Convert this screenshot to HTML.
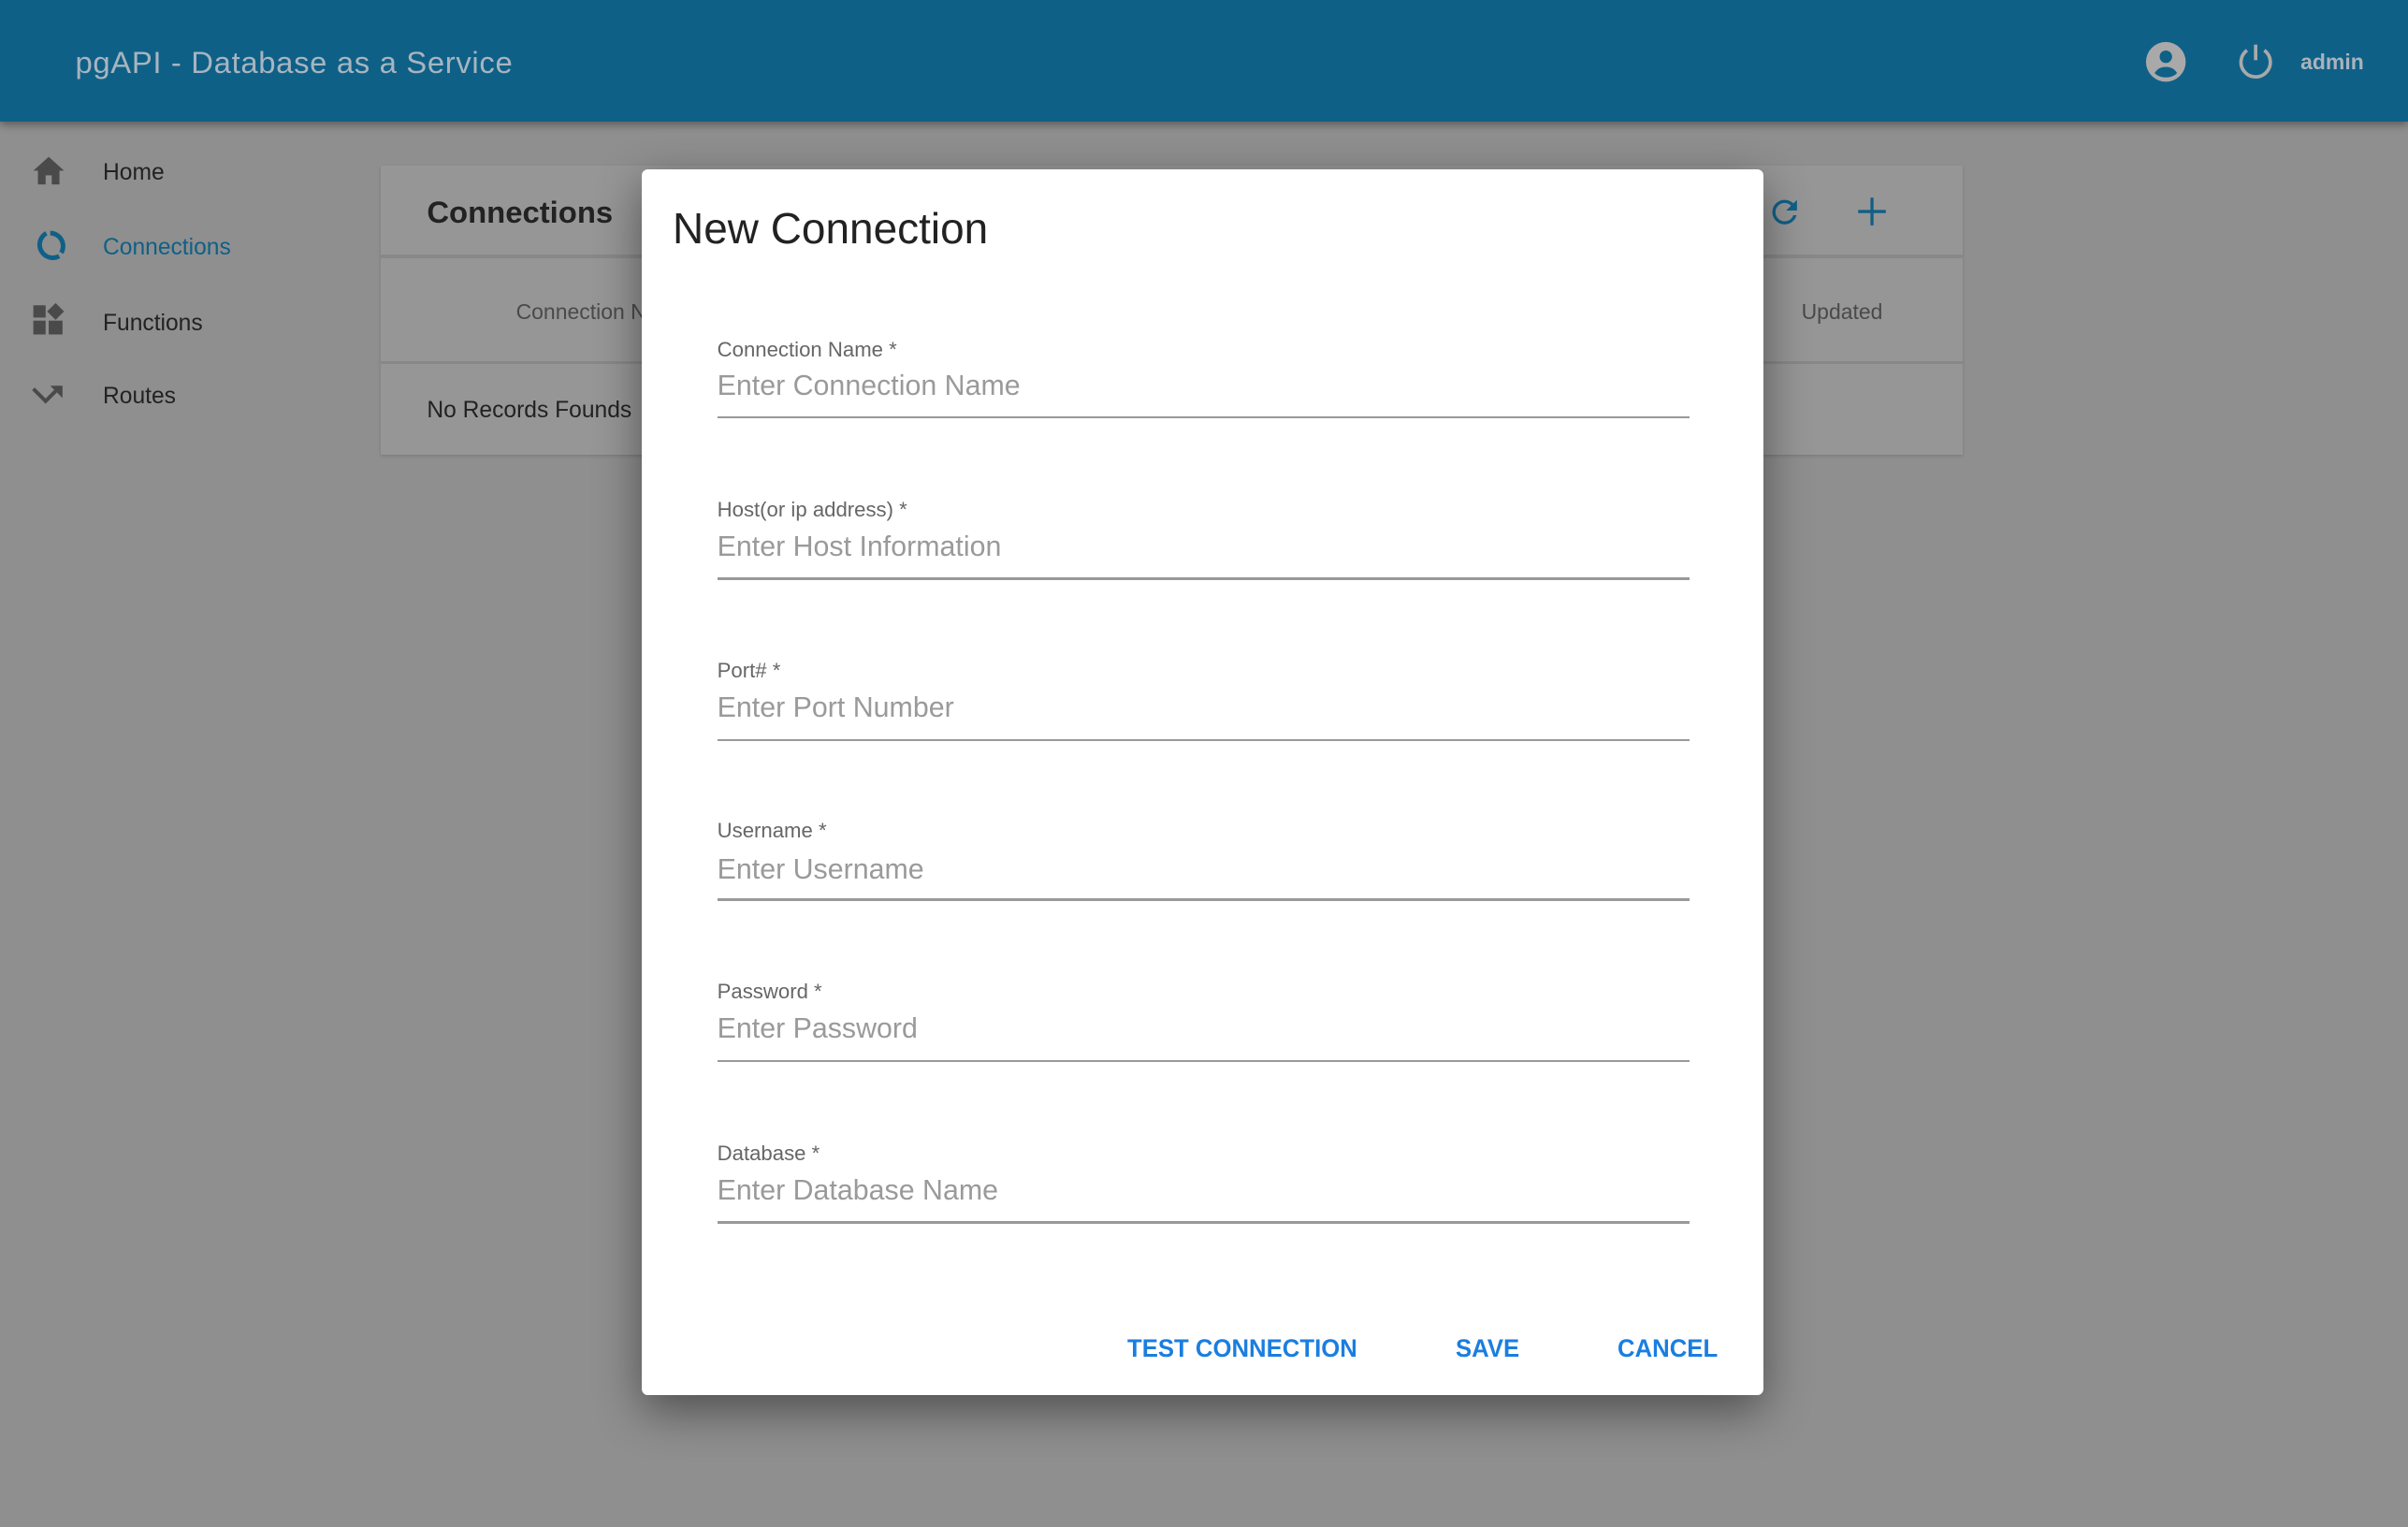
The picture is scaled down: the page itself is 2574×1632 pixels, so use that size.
<!DOCTYPE html>
<html><head><meta charset="utf-8"><style>
html,body{margin:0;padding:0;}
body{width:2574px;height:1632px;overflow:hidden;background:#8f8f8f;font-family:"Liberation Sans",sans-serif;}
#r{position:absolute;left:0;top:0;width:1568px;height:994px;zoom:1.6416;background:#8f8f8f;}
.a{position:absolute;white-space:nowrap;}
.hdr{left:0;top:0;width:1568px;height:79px;background:#0f6087;box-shadow:0 2px 5px rgba(0,0,0,.35);}
.card{left:248px;top:108px;width:1030px;height:188px;background:#969696;box-shadow:0 1px 2px rgba(0,0,0,.15);}
.ln{position:absolute;left:0;width:1030px;height:2px;background:#888;}
.dlg{left:418px;top:110px;width:730px;height:798px;background:#fff;border-radius:4px;box-shadow:0 10px 30px rgba(0,0,0,.45);}
.lab{font-size:13.5px;color:#666;}
.ph{font-size:18.5px;color:#9a9a9a;}
.ul{position:absolute;left:49px;width:633px;height:1.5px;background:#999;}
.btn{font-size:16.5px;color:#1a7ee0;font-weight:bold;transform:scaleX(.95);transform-origin:left;}
.nav{font-size:15px;color:#222;}
</style></head><body><div id="r">
<div class="a hdr">
 <div class="a" style="left:49px;top:29px;font-size:20px;color:#a7b5c0;letter-spacing:.4px">pgAPI - Database as a Service</div>
 <svg class="a" style="left:1397px;top:27px" width="27" height="27" viewBox="0 0 24 24"><circle cx="12" cy="12" r="11.5" fill="#a9a9a9"/><circle cx="12" cy="9" r="3.6" fill="#0f6087"/><path d="M5.5 18.5c1.5-2.6 3.8-3.6 6.5-3.6s5 1 6.5 3.6C16.8 20.3 14.5 21 12 21s-4.8-.7-6.5-2.5z" fill="#0f6087"/></svg>
 <svg class="a" style="left:1455px;top:27px" width="27" height="27" viewBox="0 0 24 24"><path d="M12 2v9" stroke="#a9a9a9" stroke-width="2" fill="none"/><path d="M7 5.3A8.5 8.5 0 1 0 17 5.3" stroke="#a9a9a9" stroke-width="2" fill="none"/></svg>
 <div class="a" style="left:1498px;top:32px;font-size:14px;color:#a9b3bb;font-weight:bold">admin</div>
</div>
<svg class="a" style="left:21px;top:101px" width="22" height="20" viewBox="0 0 22 20"><path d="M11 1L1 10h3v9h5v-6h4v6h5v-9h3z" fill="#4a4a4a"/></svg>
<div class="a nav" style="left:67px;top:104px">Home</div>
<svg class="a" style="left:21px;top:149px" width="22" height="22" viewBox="0 0 22 22"><path d="M12 2.5A8.5 8.5 0 0 1 19.2 15.3" stroke="#0f6087" stroke-width="3" fill="none"/><path d="M17.8 17.5A8.5 8.5 0 1 1 9.5 2.6" stroke="#0f6087" stroke-width="3" fill="none"/></svg>
<div class="a nav" style="left:67px;top:153px;color:#0f6087">Connections</div>
<svg class="a" style="left:21px;top:197px" width="22" height="22" viewBox="0 0 22 22"><rect x="1" y="2" width="8" height="8" fill="#4a4a4a"/><path d="M15.5 0.5L21 6l-5.5 5.5L10 6z" fill="#4a4a4a"/><rect x="1" y="12" width="8" height="9" fill="#4a4a4a"/><rect x="11" y="12" width="9" height="9" fill="#4a4a4a"/></svg>
<div class="a nav" style="left:67px;top:202px">Functions</div>
<svg class="a" style="left:21px;top:249px" width="22" height="18" viewBox="0 0 22 18"><path d="M1 4l8 8 9-9" stroke="#4a4a4a" stroke-width="2.4" fill="none"/><path d="M12 2h8v8z" fill="#4a4a4a"/></svg>
<div class="a nav" style="left:67px;top:250px">Routes</div>
<div class="a card">
 <div class="a" style="left:30px;top:19px;font-size:20px;color:#222;font-weight:bold">Connections</div>
 <div class="ln" style="top:58px"></div>
 <div class="a" style="left:88px;top:87px;font-size:14px;color:#4a4a4a">Connection N</div>
 <div class="a" style="left:925px;top:87px;font-size:14px;color:#4a4a4a">Updated</div>
 <div class="ln" style="top:127px"></div>
 <div class="a" style="left:30px;top:151px;font-size:15px;color:#222">No Records Founds</div>
 <svg class="a" style="left:902px;top:18px" width="24" height="24" viewBox="0 0 24 24"><path d="M17.65 6.35A7.96 7.96 0 0 0 12 4a8 8 0 1 0 7.73 10h-2.08A6 6 0 1 1 12 6c1.66 0 3.14.69 4.22 1.78L13 11h7V4z" fill="#0f6087"/></svg>
 <svg class="a" style="left:960px;top:19px" width="22" height="22" viewBox="0 0 22 22"><path d="M11 2v18M2 11h18" stroke="#0f6087" stroke-width="2"/></svg>
</div>
<div class="a dlg">
 <div class="a" style="left:20px;top:22px;font-size:28px;color:#222">New Connection</div>
 <div class="a lab" style="left:49px;top:110px">Connection Name *</div>
 <div class="a ph" style="left:49px;top:131px">Enter Connection Name</div>
 <div class="ul" style="top:161px"></div>
 <div class="a lab" style="left:49px;top:214px">Host(or ip address) *</div>
 <div class="a ph" style="left:49px;top:236px">Enter Host Information</div>
 <div class="ul" style="top:266px"></div>
 <div class="a lab" style="left:49px;top:319px">Port# *</div>
 <div class="a ph" style="left:49px;top:341px">Enter Port Number</div>
 <div class="ul" style="top:371px"></div>
 <div class="a lab" style="left:49px;top:423px">Username *</div>
 <div class="a ph" style="left:49px;top:446px">Enter Username</div>
 <div class="ul" style="top:475px"></div>
 <div class="a lab" style="left:49px;top:528px">Password *</div>
 <div class="a ph" style="left:49px;top:550px">Enter Password</div>
 <div class="ul" style="top:580px"></div>
 <div class="a lab" style="left:49px;top:633px">Database *</div>
 <div class="a ph" style="left:49px;top:655px">Enter Database Name</div>
 <div class="ul" style="top:685px"></div>
 <div class="a btn" style="left:316px;top:758px">TEST CONNECTION</div>
 <div class="a btn" style="left:530px;top:758px">SAVE</div>
 <div class="a btn" style="left:635px;top:758px">CANCEL</div>
</div>
</div></body></html>
